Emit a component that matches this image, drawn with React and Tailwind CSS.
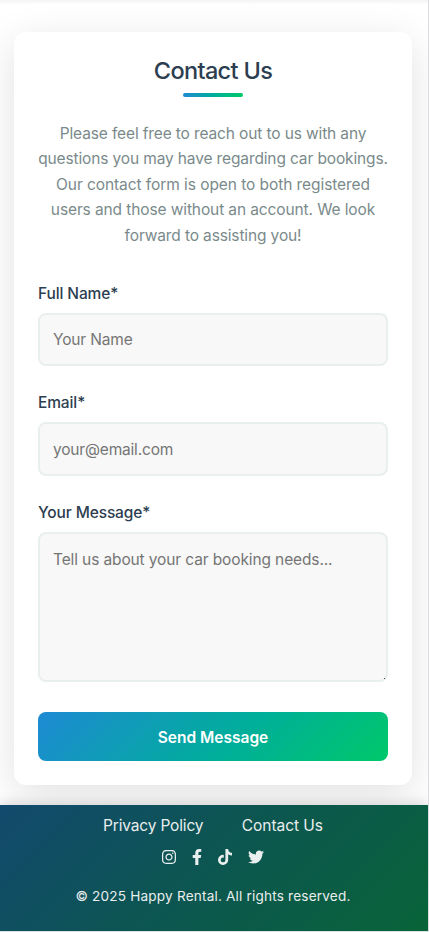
import { FaInstagram, FaFacebookF, FaTiktok, FaTwitter } from 'react-icons/fa';

const intro = [
  { text: 'Please feel free to reach out to us with any', track: 'tracking-[-0.13px]' },
  { text: 'questions you may have regarding car bookings.', track: 'tracking-[-0.13px]' },
  { text: 'Our contact form is open to both registered', track: 'tracking-[-0.07px]' },
  { text: 'users and those without an account. We look', track: 'tracking-[-0.11px]' },
  { text: 'forward to assisting you!', track: 'tracking-[-0.13px]' },
];

const field =
  'block w-full rounded-lg border-2 border-[#e9eeee] bg-[#f8f8f8] px-[13px] text-[15.5px] placeholder:text-[#757575] outline-none';
const label = 'block h-[26px] text-[15.5px] font-medium tracking-[-0.12px] text-[#2c3e50]';

export default function App() {
  return (
    <div className="h-[932px] w-[429px] overflow-hidden border-r border-b border-r-[#dcdce0] border-b-[#dce2e4] bg-white font-['Inter',sans-serif]">
      <div className="h-8 bg-linear-to-b from-[#f4f4f4] to-transparent to-[5px]" />
      <main className="ml-[14px] h-[753px] w-[398px] rounded-xl bg-white p-6 shadow-[0_10px_40px_rgba(0,0,0,0.12)]">
        <h1 className="h-[37px] text-center text-[23.5px] leading-[30px] font-medium tracking-[-0.65px] text-[#2c3e50]">Contact Us</h1>
        <div className="mx-auto h-1 w-[60px] rounded-sm bg-[linear-gradient(90deg,#1e8ad4,#00ae9a_50%,#00c86a)]" />
        <div className="mt-[23.6px] flex h-32 flex-col items-center text-[15.5px] leading-[25.6px] text-[#7a8a8b]">
          {intro.map((l) => (
            <span key={l.text} className={`whitespace-nowrap ${l.track}`}>{l.text}</span>
          ))}
        </div>
        <form className="mt-[31.4px]">
          <label className={`${label} leading-[28px]`}>Full Name*</label>
          <input className={`${field} mt-[7px] h-[53px] tracking-[-0.16px]`} placeholder="Your Name" />
          <label className={`${label} mt-6 leading-[26px]`}>Email*</label>
          <input className={`${field} mt-[6px] h-[54px] pt-[2px] tracking-[-0.18px]`} placeholder="your@email.com" />
          <label className={`${label} mt-6 leading-[26px]`}>Your Message*</label>
          <div className="relative mt-[6px]">
            <textarea className={`${field} h-[150px] resize-none pt-[14px] leading-6 tracking-[-0.12px]`} placeholder="Tell us about your car booking needs..." />
            <span className="absolute right-[3px] bottom-[3px] size-px bg-[#444]" />
          </div>
          <button type="button" className="mt-[30px] h-[49px] w-full rounded-lg bg-[linear-gradient(135deg,#1e8ad4,#00ae9a_56%,#00c86a)] pt-[2px] text-[15.5px] font-semibold text-white">Send Message</button>
        </form>
      </main>
      <footer className="relative mt-5 flex h-[126px] flex-col items-center bg-[linear-gradient(135deg,#124a6e,#0c5650_50%,#086438)] pr-[2px] text-[#e9eeee] shadow-[0_-2px_12px_rgba(0,0,0,0.15)]">
        <nav className="mt-[9px] flex h-6 w-[220px] justify-between text-[15.5px] leading-6 tracking-[-0.16px]">
          <a>Privacy Policy</a>
          <a className="tracking-[-0.04px]">Contact Us</a>
        </nav>
        <div className="mt-[11px] mr-px flex h-4 items-center gap-3">
          <FaInstagram size={16} />
          <FaFacebookF size={16} />
          <FaTiktok size={16} />
          <FaTwitter size={16} className="ml-[3px]" />
        </div>
        <p className="mt-5 text-[13.6px] leading-[22px] tracking-[0.18px]">© 2025 Happy Rental. All rights reserved.</p>
      </footer>
    </div>
  );
}
